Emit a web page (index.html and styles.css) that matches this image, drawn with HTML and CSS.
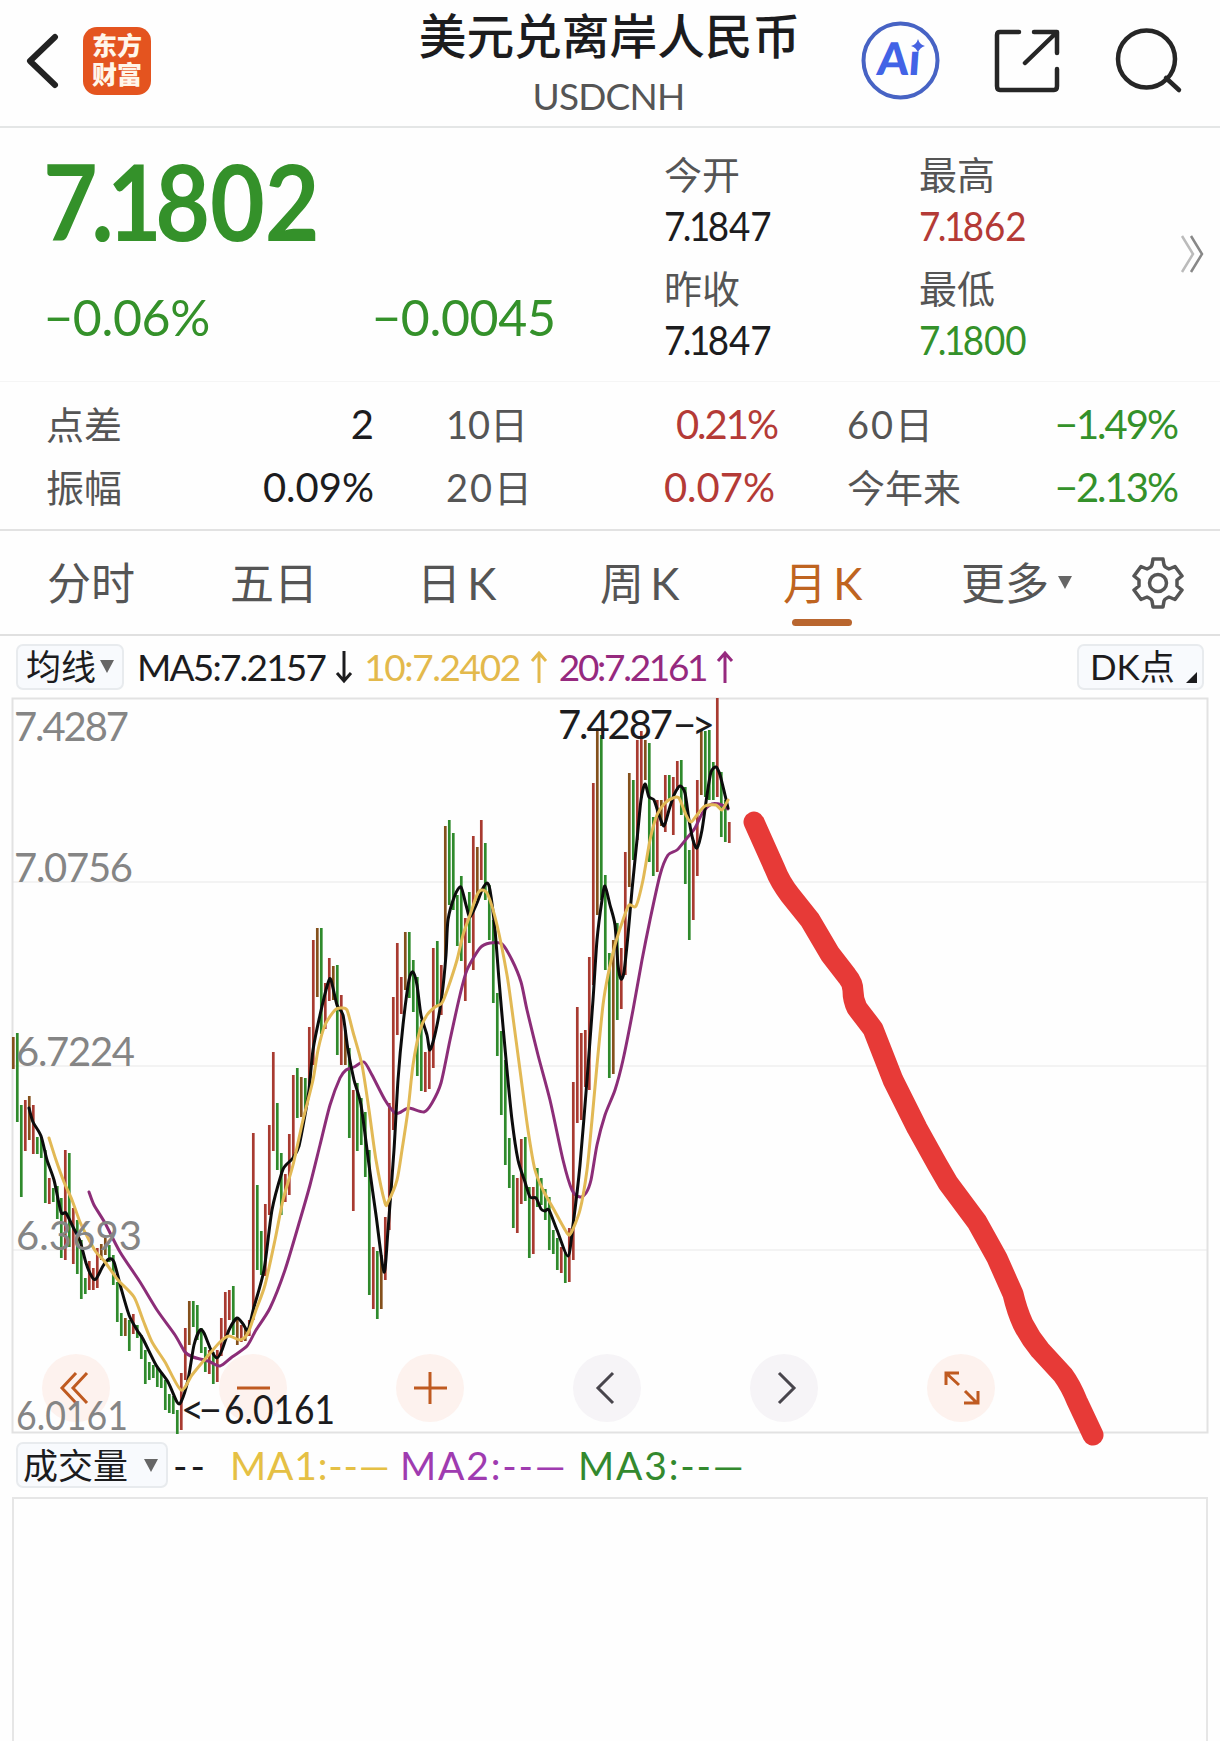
FILE: index.html
```html
<!DOCTYPE html>
<html lang="zh-CN">
<head>
    <meta charset="UTF-8">
    <meta name="viewport" content="width=device-width, initial-scale=1.0">
    <title>美元兑离岸人民币 USDCNH</title>
    <link rel="stylesheet" href="styles.css">
</head>
<body>
    <header class="header">
        <svg class="back" width="34" height="56" viewBox="0 0 34 56"><path d="M29 4 L4 28 L29 52"/></svg>
        <div class="logo">东方<br>财富</div>
        <div class="title">
            <h1>美元兑离岸人民币</h1>
            <p>USDCNH</p>
        </div>
        <div class="actions">
            <svg width="80" height="80" viewBox="0 0 80 80">
                <circle cx="39.500" cy="39.500" r="37" fill="none" stroke="#4763c4" stroke-width="4"/>
                <text x="19" y="54" class="ai" transform="skewX(-4)">Aı</text>
                <path d="M57 18 Q58.500 23.500 64 25 Q58.500 26.500 57 32 Q55.500 26.500 50 25 Q55.500 23.500 57 18Z" fill="#4763e0"/>
            </svg>
            <svg class="share" width="66" height="66" viewBox="0 0 66 66"><path d="M25 4 H6 Q3 4 3 7 V58 Q3 62 6 62 H60 Q63 62 63 58 V41 M40 4 H63 V25 M62 5 L31 35"/></svg>
            <svg class="search" width="68" height="68" viewBox="0 0 68 68"><circle cx="31.500" cy="31" r="28.500"/><path d="M51 50 L64 62"/></svg>
        </div>
    </header>

    <section class="quote">
        <div class="price green"><i>7.1</i>802</div>
        <div class="change green"><span>−0.06%</span><span>−0.0045</span></div>
        <dl class="ohlc">
            <div><dt>今开</dt><dd><i>7.1</i>847</dd></div>
            <div><dt>最高</dt><dd class="red"><i>7.1</i>862</dd></div>
            <div><dt>昨收</dt><dd><i>7.1</i>847</dd></div>
            <div><dt>最低</dt><dd class="green"><i>7.1</i>800</dd></div>
        </dl>
        <svg class="more" width="24" height="40" viewBox="0 0 24 40"><path d="M2 2 L13 20 L2 38" stroke="#bbb"/><path d="M11 2 L22 20 L11 38" stroke="#888"/></svg>
    </section>

    <section class="stats">
        <div><span>点差</span><b>2</b></div>
        <div><span>10日</span><b class="red tight">0.21%</b></div>
        <div><span class="wide">60日</span><b class="green tight">−1.49%</b></div>
        <div><span>振幅</span><b>0.09%</b></div>
        <div><span class="wide">20日</span><b class="red">0.07%</b></div>
        <div><span>今年来</span><b class="green tight">−2.13%</b></div>
    </section>

    <nav class="tabs">
        <a>分时</a>
        <a>五日</a>
        <a>日 K</a>
        <a>周 K</a>
        <a class="active">月 K</a>
        <a>更多<span class="caret"></span></a>
        <svg class="gear" width="52" height="52" viewBox="0 0 52 52">
            <path d="M21 2 H31 L32 8 Q32.500 10 35 11 L37 12 L43 9.500 L50 19 L45 23 V29 L50 33 L43 42.500 L37 40 L35 41 Q32.500 42 32 44 L31 50 H21 L20 44 Q19.500 42 17 41 L15 40 L9 42.500 L2 33 L7 29 V23 L2 19 L9 9.500 L15 12 L17 11 Q19.500 10 20 8Z"/>
            <circle cx="26" cy="26" r="8.500"/>
        </svg>
    </nav>

    <div class="ma-row">
        <span class="chip">均线<span class="caret"></span></span>
        <span class="ma5">MA5:7.2157</span><svg class="arrow" width="18" height="34" viewBox="0 0 18 34"><path d="M9 1 V31 M2 23 L9 31 L16 23"/></svg>
        <span class="ma10">10:7.2402</span><svg class="arrow ma10" width="18" height="34" viewBox="0 0 18 34"><path d="M9 33 V3 M2 11 L9 3 L16 11"/></svg>
        <span class="ma20">20:7.2161</span><svg class="arrow ma20" width="18" height="34" viewBox="0 0 18 34"><path d="M9 33 V3 M2 11 L9 3 L16 11"/></svg>
        <span class="chip dk">DK点<span class="corner"></span></span>
    </div>

    <!-- chart units are page pixels, the top of the box is y = 698 -->
    <svg class="chart" width="1196" height="735" viewBox="12 698 1196 735">
        <path class="grid" d="M13 882 H1207 M13 1066 H1207 M13 1250 H1207"/>
        <rect class="frame" x="12.500" y="698.500" width="1195" height="734"/>

        <g class="warm">
            <circle cx="76" cy="1388" r="34"/>
            <circle cx="253" cy="1388" r="34"/>
            <circle cx="430" cy="1388" r="34"/>
            <circle cx="961" cy="1388" r="34"/>
        </g>
        <g class="cool">
            <circle cx="607" cy="1388" r="34"/>
            <circle cx="784" cy="1388" r="34"/>
        </g>
        <path class="icon" d="M76 1373 L62 1388 L76 1403 M87 1373 L73 1388 L87 1403 M237 1388 H270 M414 1388 H447 M430 1372 V1404"/>
        <path class="icon" d="M946 1385 V1373 H959 M946 1373 L959 1385 M965 1391 L977 1403 M978 1391 V1403 H964"/>
        <path class="icon dark" d="M613 1373 L598 1388 L613 1403 M779 1373 L794 1388 L779 1403"/>

        <g id="bars"></g>
        <path class="line l20" id="ma20"/>
        <path class="line l5" id="ma5"/>
        <path class="line l10" id="ma10"/>

        <g class="axis">
            <text x="14" y="741" textLength="115">7.4287</text>
            <text x="14" y="882" textLength="119">7.0756</text>
            <text x="16" y="1066" textLength="119">6.7224</text>
            <text x="16" y="1250" textLength="126">6.3693</text>
            <text x="16" y="1430" textLength="112" lengthAdjust="spacingAndGlyphs">6.0161</text>
        </g>
        <g class="mark">
            <text x="558" y="739" textLength="115">7.4287</text>
            <text x="181" y="1424" textLength="41">&lt;−</text>
            <text x="224" y="1424" textLength="111" lengthAdjust="spacingAndGlyphs">6.0161</text>
            <text x="673" y="739" textLength="42">−&gt;</text>
        </g>
        <path class="brush" d="M754 822 L775 869 Q780 882 790 895 L810 920 L830 954 L847 976 Q853 983 853 991 Q853 1000 857 1008 L873 1029 L893 1080 L917 1128 L937 1164 L948 1183 L977 1222 L997 1258 L1013 1294 Q1017 1311 1023 1324 Q1030 1338 1040 1350 L1063 1375 Q1071 1386 1077 1401 L1093 1435"/>
    </svg>

    <div class="vol-row">
        <span class="chip">成交量<span class="caret"></span></span>
        <span class="dash">--</span>
        <span class="v1">MA1:--—</span>
        <span class="v2">MA2:--—</span>
        <span class="v3">MA3:--—</span>
    </div>
    <div class="volume"></div>

    <script src="chart.js"></script>
</body>
</html>
```

FILE: chart.js
```js
// high, low and colour of each month, one bar every 4px
const bars = `1037 1069 b,1033 1122 g,1105 1197 g,1100 1151 r,1096 1140 b,1105 1154 r,1137 1154 g,1137 1158 g,1150 1203 g,1178 1204 r,
1188 1202 g,1186 1219 g,1198 1258 g,1150 1260 r,1153 1247 g,1208 1264 r,1220 1274 g,1240 1299 g,1278 1294 g,1261 1290 r,
1268 1290 r,1248 1288 r,1244 1260 b,1238 1255 b,1245 1262 g,1255 1285 g,1282 1322 g,1313 1336 g,1318 1336 b,1320 1351 g,
1314 1334 r,1325 1338 g,1335 1359 g,1350 1384 g,1362 1380 g,1365 1378 g,1368 1387 g,1372 1388 g,1380 1410 g,1394 1413 g,
1396 1414 g,1410 1434 g,1373 1430 r,1328 1380 r,1301 1345 b,1301 1327 g,1305 1340 g,1328 1353 g,1347 1372 g,1350 1374 r,
1352 1384 g,1350 1382 r,1318 1356 r,1292 1338 r,1290 1320 r,1286 1335 g,1318 1345 b,1325 1342 r,1328 1341 b,1320 1336 r,
1133 1320 r,1185 1270 g,1231 1275 g,1204 1276 r,1125 1215 r,1052 1151 r,1103 1170 g,1153 1215 g,1174 1202 r,1134 1195 r,
1075 1160 r,1068 1118 g,1077 1117 b,1078 1110 g,1027 1091 r,940 1065 r,928 997 b,928 1034 g,983 1029 r,958 1001 r,
966 1000 b,965 1055 g,995 1065 r,1030 1065 b,1048 1138 g,1090 1211 r,1083 1151 g,1098 1145 g,1112 1177 g,1150 1295 g,
1247 1309 r,1251 1319 g,1255 1309 b,1217 1280 r,1103 1230 r,997 1130 r,943 1035 r,977 1014 r,932 990 b,932 998 g,
960 1012 g,977 1076 g,1020 1091 g,1052 1092 r,1050 1089 r,948 1068 r,941 1007 g,965 1015 r,826 960 b,820 905 g,
833 910 g,895 946 g,876 961 g,918 1001 r,892 943 g,836 970 r,847 900 b,820 880 r,843 900 g,885 940 g,
920 1003 g,993 1056 g,1031 1115 g,1060 1165 g,1138 1188 g,1175 1228 g,1178 1233 r,1139 1204 r,1137 1201 g,1187 1258 g,
1187 1254 r,1168 1207 g,1178 1205 g,1189 1220 g,1197 1250 g,1230 1254 g,1238 1270 g,1247 1273 r,1252 1283 g,1228 1282 r,
1082 1260 r,1007 1123 r,1033 1120 r,1030 1087 r,957 1090 r,783 985 r,728 915 b,735 900 g,875 970 g,953 1078 g,
940 1074 b,923 1020 g,948 1009 r,852 975 r,773 887 b,780 860 g,740 840 r,731 798 r,740 780 b,743 862 g,
817 876 g,800 872 r,800 826 b,775 832 r,775 800 g,777 835 r,761 790 r,760 815 g,787 884 g,850 940 g,
840 920 r,780 876 r,730 795 b,731 797 g,730 800 g,762 800 g,698 797 r,772 837 g,800 842 g,822 843 r`;

const ma5 = "29,1108 33,1122 41,1136 47,1160 54,1180 61,1212 66,1213 73,1227 80,1241 86,1263 92,1277 96,1279 103,1266 109,1259 114,1262 121,1288 129,1315 137,1330 143,1339 156,1365 168,1382 177,1402 181,1402 188,1380 194,1345 200,1330 204,1333 211,1350 217,1358 222,1350 229,1330 237,1318 243,1324 248,1330 254,1307 264,1270 272,1210 282,1172 286,1165 293,1158 299,1146 305,1115 309,1090 313,1050 320,1015 328,983 331,980 337,1005 343,1015 348,1050 354,1080 361,1105 369,1165 376,1215 384,1272 388,1230 394,1150 398,1080 403,1025 409,980 413,972 417,985 421,1015 427,1035 430,1050 436,1030 442,995 446,955 448,920 455,895 461,887 466,905 470,917 477,903 482,890 487,883 490,890 495,930 499,980 502,1015 507,1070 512,1120 518,1160 525,1182 530,1197 536,1198 541,1209 545,1211 549,1210 557,1230 568,1256 573,1225 580,1165 587,1080 593,1000 597,940 602,900 605,886 610,905 615,925 618,965 621,979 624,972 628,935 632,890 637,840 641,800 645,784 649,797 654,800 659,815 664,826 669,810 674,795 680,786 685,793 689,820 693,840 697,848 702,830 707,795 711,772 716,767 720,775 725,795 728,808";
const ma10 = "49,1138 56,1160 64,1182 72,1200 80,1222 88,1238 96,1252 105,1262 118,1280 134,1297 143,1320 152,1342 165,1362 181,1390 192,1375 206,1358 220,1342 229,1336 240,1340 248,1333 256,1310 265,1285 275,1240 283,1200 293,1165 303,1120 313,1080 318,1050 325,1025 335,1010 341,1008 347,1010 353,1032 362,1065 369,1110 376,1160 385,1203 388,1202 397,1180 402,1150 408,1110 413,1065 420,1030 427,1015 435,1007 442,1003 448,988 457,960 463,935 470,915 477,895 482,890 488,895 497,925 507,975 512,1010 520,1070 528,1130 535,1170 543,1190 553,1208 567,1233 571,1233 580,1210 587,1170 592,1120 597,1065 603,1005 608,975 615,945 623,920 629,905 636,906 643,880 650,840 657,815 665,803 673,798 679,798 686,815 691,822 697,815 705,806 716,805 722,810 728,800";
const ma20 = "89,1192 94,1205 105,1223 120,1252 140,1282 157,1310 175,1335 185,1352 193,1357 208,1361 220,1366 232,1357 247,1346 256,1330 270,1308 285,1270 300,1220 310,1185 320,1145 330,1105 340,1078 346,1070 354,1067 364,1062 372,1075 385,1100 395,1113 401,1112 409,1108 424,1112 432,1103 441,1083 450,1040 460,995 467,970 480,948 490,943 502,944 512,960 521,982 527,1010 538,1055 550,1100 563,1160 572,1190 580,1197 586,1193 591,1180 597,1145 605,1115 615,1090 623,1060 633,1010 642,960 650,920 660,875 668,855 677,850 687,838 695,828 703,812 712,804 722,805 728,809";

document.getElementById("bars").innerHTML = bars.split(",").map((bar, i) => {
    const [high, low, color] = bar.trim().split(" ");
    const x = 13.3 + i * 4;
    return `<path class="${color}" d="M${x.toFixed(1)} ${high}V${low}"/>`;
}).join("");

// soft curve that still passes through every point
function smooth(points) {
    const p = points.split(" ").map((s) => s.split(",").map(Number));
    let d = "M" + p[0];
    for (let i = 0; i < p.length - 1; i++) {
        const a = p[i - 1] || p[i];
        const b = p[i];
        const c = p[i + 1];
        const e = p[i + 2] || c;
        d += `C${b[0] + (c[0] - a[0]) / 8},${b[1] + (c[1] - a[1]) / 8} ${c[0] - (e[0] - b[0]) / 8},${c[1] - (e[1] - b[1]) / 8} ${c}`;
    }
    return d;
}

document.getElementById("ma5").setAttribute("d", smooth(ma5));
document.getElementById("ma10").setAttribute("d", smooth(ma10));
document.getElementById("ma20").setAttribute("d", smooth(ma20));
```

FILE: styles.css
```css
* {
    box-sizing: border-box;
    margin: 0;
    padding: 0;
}

body {
    width: 1220px;
    height: 1741px;
    overflow: hidden;
    background: #fefefe;
    color: #1c1c1e;
    font-family: Lato, "Noto Sans CJK SC", sans-serif;
    font-size: 39px;
    line-height: 1;
    display: flex;
    flex-direction: column;
}

/* tighter digits around the decimal point */
i {
    font-style: normal;
    letter-spacing: -0.07em;
}

svg {
    flex: none;
    fill: none;
}

.green { color: #34912a; }
.red { color: #b43a36; }

/* header */
.header {
    height: 128px;
    flex: none;
    border-bottom: 2px solid #e4e6e6;
    display: grid;
    grid-template-columns: 57px 362px 380px 1fr;
    padding-left: 26px;
}

.back {
    margin-top: 33px;
    stroke: #222;
    stroke-width: 6;
    stroke-linecap: round;
    stroke-linejoin: round;
}

.logo {
    width: 68px;
    height: 68px;
    margin-top: 27px;
    padding-top: 4px;
    border-radius: 14px;
    background: #e4541f;
    color: #fff6ea;
    font-size: 25px;
    font-weight: 900;
    line-height: 29px;
    text-align: center;
}

.title {
    margin-left: -31px;
    width: 391px;
    text-align: center;
}

.title h1 {
    font-size: 47.7px;
    font-weight: 500;
    line-height: 50px;
    margin-top: 11px;
    white-space: nowrap;
}

.title p {
    font-size: 37px;
    line-height: 40px;
    margin: 15px 2px 0 0;
    letter-spacing: -0.8px;
    color: #555;
}

.actions {
    display: flex;
    align-items: flex-start;
    padding: 21px 0 0 36px;
}

.ai {
    fill: #4263e6;
    font: 900 45px Lato, sans-serif;
}

.share,
.search {
    stroke: #262626;
    stroke-width: 4.5;
    stroke-linecap: round;
    stroke-linejoin: round;
}

.share {
    margin: 7px 0 0 53px;
}

.search {
    margin: 7px 0 0 55px;
}

/* price block */
.quote {
    height: 254px;
    flex: none;
    border-bottom: 1px solid #f5f5f5;
    padding-left: 44px;
    display: grid;
    grid-template-columns: 620px 1fr 28px;
    grid-template-rows: 126px 1fr;
}

.price {
    font-size: 105px;
    font-weight: 700;
    line-height: 110px;
    padding-top: 17px;
    margin-left: -1px;
    transform: scaleX(0.9);
    transform-origin: left;
}

.change {
    grid-row: 2;
    font-size: 50px;
    line-height: 60px;
    padding-top: 33px;
    letter-spacing: -0.3px;
    display: flex;
}

.change span:first-child {
    width: 328px;
}

.ohlc {
    grid-row: 1 / 3;
    grid-column: 2;
    display: grid;
    grid-template-columns: 255px 1fr;
    grid-template-rows: 114px 114px;
    padding-top: 24px;
}

.ohlc dt {
    font-size: 38px;
    line-height: 44px;
    color: #555;
}

.ohlc dd {
    font-size: 40px;
    line-height: 44px;
    margin-top: 8px;
    transform: scaleX(0.92);
    transform-origin: left;
}

.more {
    grid-column: 3;
    grid-row: 1 / 3;
    margin-top: 106px;
    margin-left: -12px;
    stroke-width: 2.5;
}

/* stats */
.stats {
    height: 149px;
    flex: none;
    border-bottom: 2px solid #e2e2e2;
    padding: 12px 45px 0 46px;
    display: grid;
    grid-template-columns: 328px 329px 328px;
    column-gap: 72px;
    grid-template-rows: 63px 63px;
    line-height: 60px;
}

.stats span {
    color: #555;
    font-size: 38px;
}

.stats .wide {
    letter-spacing: 2px;
}

.stats b {
    font-weight: 400;
    font-size: 40px;
}

.stats .tight {
    letter-spacing: -2px;
    margin-right: -2px;
}

.stats div {
    display: flex;
    justify-content: space-between;
}

/* tabs */
.tabs {
    height: 105px;
    flex: none;
    border-bottom: 2px solid #e0e0e0;
    padding-left: 47px;
    display: grid;
    grid-template-columns: 183px 187px 183px 183px 178px 171px 1fr;
    align-items: center;
    font-size: 44px;
    color: #555;
}

.tabs a {
    position: relative;
    display: flex;
    align-items: center;
    white-space: pre;
    word-spacing: -5px;
}

.tabs .active {
    color: #bf6420;
}

.tabs .active::after {
    content: "";
    position: absolute;
    left: 9px;
    bottom: -21px;
    width: 60px;
    height: 7px;
    border-radius: 4px;
    background: #b9662f;
}

.caret {
    border: 7px solid transparent;
    border-top: 13px solid #666;
    border-bottom: 0;
    margin-left: 9px;
}

.gear {
    stroke: #555;
    stroke-width: 3.5;
    stroke-linejoin: round;
}

/* moving average legend */
.ma-row {
    height: 62px;
    flex: none;
    display: flex;
    align-items: center;
    padding: 0 16px 1px 16px;
    font-size: 37px;
}

.chip {
    height: 46px;
    display: flex;
    align-items: center;
    border: 2px solid #e8ebee;
    border-radius: 7px;
    background: #f8fafd;
    font-size: 35px;
}

.ma-row .chip {
    width: 108px;
    padding-left: 8px;
}

.ma-row .chip .caret {
    margin-left: 4px;
}

.ma-row .dk {
    position: relative;
    width: 127px;
    margin-left: auto;
    padding-left: 11px;
}

.corner {
    position: absolute;
    right: 5px;
    bottom: 5px;
    border-left: 11px solid transparent;
    border-bottom: 11px solid #1c1c1e;
}

.arrow {
    stroke: currentColor;
    stroke-width: 3;
    margin: 0 11px 0 10px;
}

.ma5 { margin-left: 13px; letter-spacing: -1.8px; }
.ma10 { color: #e3b94c; }
.ma20 { color: #96297e; }
span.ma10 { letter-spacing: -1.4px; }
span.ma20 { letter-spacing: -2.3px; }

/* chart */
.chart {
    margin-left: 12px;
    overflow: visible;
}

.grid { stroke: #f3f3f3; stroke-width: 2; }
.frame { stroke: #e2e2e2; stroke-width: 2; }
.warm { fill: #fdf2ee; }
.cool { fill: #f6f4f7; }
.icon { stroke: #bf5a20; stroke-width: 3; }
.icon.dark { stroke: #48454c; }

#bars path { stroke-width: 2.7; }
#bars .r { stroke: #a83a30; }
#bars .g { stroke: #2f8a2c; }
#bars .b { stroke: #84501c; }

.line {
    stroke-width: 3;
    stroke-linejoin: round;
    stroke-linecap: round;
}

.l5 { stroke: #0c0c0c; }
.l10 { stroke: #e2b955; }
.l20 { stroke: #8c2d78; }

.axis { fill: #858585; font-size: 40px; }
.mark { fill: #1c1c1e; font-size: 40px; }

.brush {
    stroke: #e73a37;
    stroke-width: 21;
    stroke-linecap: round;
    stroke-linejoin: round;
}

/* volume */
.vol-row {
    height: 64px;
    flex: none;
    display: flex;
    align-items: center;
    padding-left: 16px;
    font-size: 39px;
}

.vol-row .chip {
    width: 152px;
    padding-left: 5px;
}

.vol-row .caret {
    margin-left: 16px;
}

.dash { width: 57px; padding-left: 5px; letter-spacing: 3px; }
.v1 { width: 170px; color: #e5c044; padding-left: 5px; letter-spacing: 0.8px; }
.v2 { width: 178px; color: #9f3bb0; padding-left: 5px; letter-spacing: 1.8px; }
.v3 { color: #33892e; padding-left: 5px; letter-spacing: 1.8px; }

.volume {
    flex: 1;
    margin: 0 12px;
    border: 2px solid #e6e6e6;
    border-bottom: 0;
}
```
